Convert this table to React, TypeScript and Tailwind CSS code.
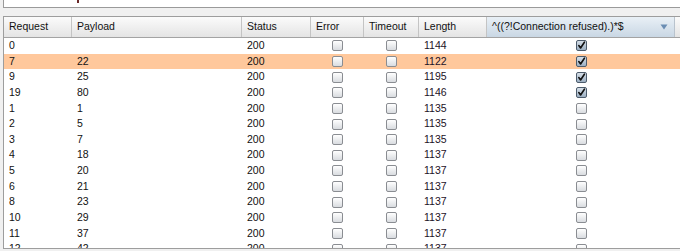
import React from 'react'

type Row = { req: string; payload: string; length: string; match: boolean; hl?: boolean }

const rows: Row[] = [
  { req: '0', payload: '', length: '1144', match: true },
  { req: '7', payload: '22', length: '1122', match: true, hl: true },
  { req: '9', payload: '25', length: '1195', match: true },
  { req: '19', payload: '80', length: '1146', match: true },
  { req: '1', payload: '1', length: '1135', match: false },
  { req: '2', payload: '5', length: '1135', match: false },
  { req: '3', payload: '7', length: '1135', match: false },
  { req: '4', payload: '18', length: '1137', match: false },
  { req: '5', payload: '20', length: '1137', match: false },
  { req: '6', payload: '21', length: '1137', match: false },
  { req: '8', payload: '23', length: '1137', match: false },
  { req: '10', payload: '29', length: '1137', match: false },
  { req: '11', payload: '37', length: '1137', match: false },
  { req: '12', payload: '42', length: '1137', match: false },
]

function Check({ on }: { on: boolean }) {
  if (on) {
    return (
      <div className="w-[11px] h-[11px] rounded-[2px] border border-[#4d5c6c] bg-gradient-to-b from-[#d6dfe8] to-[#9db0c3] flex items-center justify-center">
        <svg width="9" height="9" viewBox="0 0 9 9">
          <path d="M1.8 4.6 L3.6 7 L7.4 1.2" fill="none" stroke="#111" strokeWidth="1.6" strokeLinecap="round" strokeLinejoin="round" />
        </svg>
      </div>
    )
  }
  return (
    <div className="w-[11px] h-[11px] rounded-[2px] border border-[#8a8d92] bg-gradient-to-b from-[#ffffff] to-[#d9dce0]" />
  )
}

const cols = ['w-[68px]', 'w-[170px]', 'w-[69px]', 'w-[53px]', 'w-[55px]', 'w-[68px]', 'w-[188px]']

export default function App() {
  return (
    <div
      className="w-[680px] h-[251px] overflow-hidden bg-[#f0f0f0] text-[10.5px] text-[#111]"
      style={{ fontFamily: '"Liberation Sans", Arial, sans-serif' }}
    >
      {/* top panel, mostly scrolled out */}
      <div className="ml-[3px] h-[8px] bg-white border-l border-b border-[#9a9a9a] pl-[73px]">
        <div className="w-[2px] h-[3px] bg-[#6b2a2a]" />
      </div>

      {/* results table */}
      <div className="mt-[8px] ml-[3px] w-[700px] h-[233px] overflow-hidden bg-white border border-[#9d9d9d]">
        <div className="flex h-[21px] border-b border-[#a3a3a3] bg-gradient-to-b from-[#fbfbfb] to-[#e4e4e4]">
          {['Request', 'Payload', 'Status', 'Error', 'Timeout', 'Length'].map((h, i) => (
            <div
              key={h}
              className={`${cols[i]} shrink-0 flex items-center pl-[5px] border-r border-[#c4c4c4]`}
            >
              {h}
            </div>
          ))}
          <div className="w-[188px] shrink-0 flex items-center justify-between pl-[5px] pr-[6px] border-r border-[#b9c3cd] bg-gradient-to-b from-[#e9f0f6] to-[#c9d7e4]">
            <span>^((?!Connection refused).)*$</span>
            <svg width="8" height="6" viewBox="0 0 8 6">
              <path d="M0.5 0.5 H7.5 L4 5.5 Z" fill="#6a8db3" />
            </svg>
          </div>
          <div className="flex-1" />
        </div>

        {rows.map((r) => (
          <div key={r.req} className={`flex h-[15.65px] items-center ${r.hl ? 'bg-[#ffc89c]' : 'bg-white'}`}>
            <div className={`${cols[0]} shrink-0 pl-[5px]`}>{r.req}</div>
            <div className={`${cols[1]} shrink-0 pl-[5px]`}>{r.payload}</div>
            <div className={`${cols[2]} shrink-0 pl-[5px]`}>200</div>
            <div className={`${cols[3]} shrink-0 flex justify-center`}>
              <Check on={false} />
            </div>
            <div className={`${cols[4]} shrink-0 flex justify-center`}>
              <Check on={false} />
            </div>
            <div className={`${cols[5]} shrink-0 pl-[5px] text-[#1c1226]`}>{r.length}</div>
            <div className={`${cols[6]} shrink-0 flex justify-center`}>
              <Check on={r.match} />
            </div>
          </div>
        ))}
      </div>
    </div>
  )
}
